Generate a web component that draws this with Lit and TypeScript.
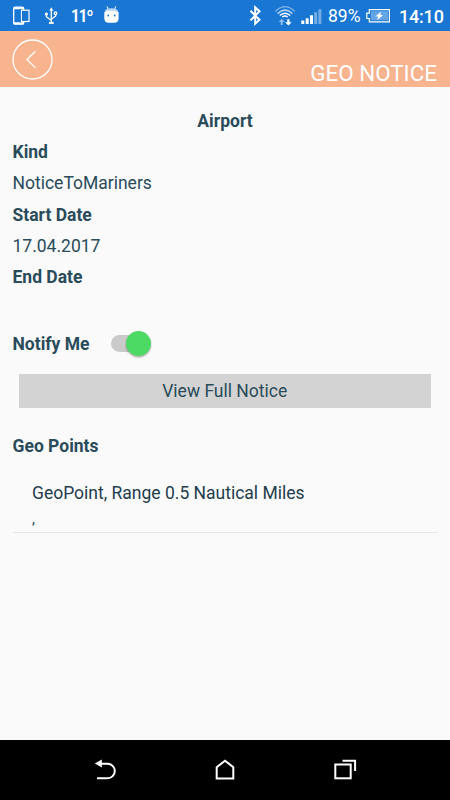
import { LitElement, html, css, svg } from "lit";
import { customElement, property, state } from "lit/decorators.js";

@customElement("status-bar")
class StatusBar extends LitElement {
  static styles = css`
    :host { display: flex; align-items: center; height: 31px; padding: 0 7px 0 12px; box-sizing: border-box;
      background: #1976d3; color: #fff; font-family: Roboto, sans-serif; }
    svg { display: block; flex: none; }
    .usb { margin-left: 14px; }
    .temp { font-weight: 700; font-size: 17.5px; line-height: 31px; margin-left: 13px; width: 22px; letter-spacing: -1px; padding-top: 1px;
      white-space: nowrap; transform: scaleX(.86); transform-origin: left; }
    .bot { margin-left: 10px; }
    .spacer { flex: 1; }
    .wifi { margin-left: 12px; }
    .signal { margin-left: 5px; }
    .pct { font-size: 17.5px; line-height: 31px; margin-left: 6px; width: 33px; padding-top: 2px; white-space: nowrap; }
    .battery { margin-left: 5px; }
    .clock { font-size: 18px; font-weight: 500; line-height: 31px; margin-left: 8px; width: 44px; padding-top: 2px; white-space: nowrap; letter-spacing: -0.2px; }
  `;
  render() {
    return html`
      <svg width="18" height="31" viewBox="12 0 18 31" fill="none" stroke="#fff">
        <rect x="13.7" y="7.2" width="10" height="17" rx="1.3" stroke-width="1.3" />
        <path d="M14 8.3h9.5M14 23.2h9.5" stroke-width="2" />
        <rect x="21.3" y="10.2" width="7.7" height="11.3" fill="#1976d3" stroke-width="1.2" />
        <path d="M20.2 9v13.5" stroke="#1976d3" />
      </svg>
      <svg class="usb" width="14" height="31" viewBox="44 0 14 31" fill="none" stroke="#fff" stroke-width="1.3">
        <path d="M51.3 9v14M46.4 14.5v2.2l4.9 3.7M51.3 19.2l4.4-3.2v-2" />
        <path d="M51.3 7.3l2 3.4h-4z" fill="#fff" stroke="none" />
        <circle cx="46.4" cy="14" r="1.6" fill="#fff" stroke="none" />
        <circle cx="55.5" cy="13.2" r="1.3" />
        <path d="M48.9 22.9h4.8" stroke-width="2" />
      </svg>
      <span class="temp">11º</span>
      <svg class="bot" width="18" height="31" viewBox="103 0 18 31">
        <path d="M107 6.3l1.2 3M115.8 6.3l-1.2 3" stroke="#fff" stroke-width="1" />
        <path d="M105 10.5q1.5-2.2 6.4-2.2t6.4 2.2v1.5h-12.8z" fill="#b9d6f3" />
        <path d="M104.3 12q7.1-2.400 14.3 0v6.200q0 4.600-4.500 4.600h-5.300q-4.500 0-4.500-4.600z" fill="#fff" />
        <circle cx="108.2" cy="15.5" r=".9" fill="#1976d3" /><circle cx="114.7" cy="15.5" r=".9" fill="#1976d3" />
      </svg>
      <span class="spacer"></span>
      <svg width="14" height="31" viewBox="248 0 14 31" fill="none" stroke="#fff" stroke-width="2">
        <path d="M250.500 10.800l9 9-4.300 4V7.400l4.300 4-9 9" />
      </svg>
      <svg class="wifi" width="22" height="31" viewBox="274 0 22 31" fill="none" stroke="#fff" stroke-width="1.5">
        <path d="M275.2 11.500q9.800-9.500 19.600 0" opacity=".4" />
        <path d="M277.6 13.700q7.400-7.200 14.800 0" opacity=".65" />
        <path d="M279.8 15.500q5.200-4.600 10.400 0M282.3 17q2.700-2 5.400 0" />
        <path d="M281.7 18.800l3 3.200h-2v3h-2v-3h-2z" fill="#8dbcf0" stroke="none" />
        <path d="M288.4 25.500l-3.300-3.300h2.200v-3h2.200v3h2.200z" fill="#fff" stroke="none" />
      </svg>
      <svg class="signal" width="21" height="31" viewBox="301 0 21 31" fill="#fff">
        <path d="M301.3 20.500h3v3.500h-3zM305.700 18.200h3v5.800h-3zM310 15.200h3v8.800h-3z" />
        <path d="M314.2 12.200h3v11.800h-3zM318.400 9.200h3v14.800h-3z" opacity=".4" />
      </svg>
      <span class="pct">89%</span>
      <svg class="battery" width="25" height="31" viewBox="366 0 25 31">
        <path d="M369.3 9.700h20.100v12.100h-20.100v-3.300h-2.500v-5.400h2.500z" fill="none" stroke="#fff" stroke-width="1.2" />
        <rect x="370.7" y="11.2" width="17.3" height="9.1" fill="#64a5e8" />
        <path d="M381.3 11.500l-6 5h3l-1.200 3.800 6-5.200h-3z" fill="#fff" />
      </svg>
      <span class="clock">14:10</span>`;
  }
}

@customElement("title-bar")
class TitleBar extends LitElement {
  @property() heading = "";
  static styles = css`
    :host { display: flex; justify-content: space-between; height: 56px; box-sizing: border-box; padding: 0 13px 0 12px;
      background: #f8b38f; color: #fff; font-family: Roboto, sans-serif; }
    button { border: 0; padding: 0; margin: 8px 0 0; width: 41px; height: 41px; background: none; }
    svg { display: block; }
    h1 { margin: 29px 0 0; font-size: 22.4px; line-height: 26px; font-weight: 400; white-space: nowrap; }
  `;
  render() {
    return html`
      <button aria-label="Back">
        <svg width="41" height="41" fill="none" stroke="#fff" stroke-width="1.3">
          <circle cx="20.5" cy="20.5" r="19.5" /><path d="M23.5 12.3l-8.5 8.3 8.5 8.3" />
        </svg>
      </button>
      <h1>${this.heading}</h1>`;
  }
}

@customElement("toggle-switch")
class ToggleSwitch extends LitElement {
  @property({ type: Boolean }) checked = false;
  static styles = css`
    :host { display: block; width: 40px; height: 26px; }
    .track { display: flex; align-items: center; width: 38px; height: 17.5px; margin-top: 4.2px; border-radius: 9px; background: #cacaca; }
    .thumb { flex: none; width: 25px; height: 25px; border-radius: 50%; background: #fff; box-shadow: 0 1.5px 2px rgba(0,0,0,.3); }
    .on { margin-left: 15px; background: #4cd964; }
  `;
  render() {
    return html`<div class="track"><div class="thumb ${this.checked ? "on" : ""}"></div></div>`;
  }
}

@customElement("nav-bar")
class NavBar extends LitElement {
  static styles = css`
    :host { display: flex; justify-content: center; align-items: center; gap: 95px; height: 60px; background: #000; }
    svg { display: block; overflow: visible; }
  `;
  render() {
    const icons = [
      svg`<path d="M4.5 5.700h9a6.400 6.400 0 0 1 0 14.600h-10.500" /><path d="M.8 5.500l7-4v8z" fill="#fff" stroke="none" />`,
      svg`<path d="M3.700 20.500V9.200l8.300-6.500 8.300 6.500v11.300z" />`,
      svg`<rect x="3.300" y="6.500" width="15.400" height="13.800" /><path d="M10.500 2.700h12.600v10.400" />`,
    ];
    return icons.map((i) => html`<svg width="24" height="24" fill="none" stroke="#fff" stroke-width="2">${i}</svg>`);
  }
}

@customElement("app-root")
class AppRoot extends LitElement {
  @state() private notify = true;
  private fields = [
    { label: "Kind", value: "NoticeToMariners" },
    { label: "Start Date", value: "17.04.2017" },
    { label: "End Date", value: "" },
  ];
  static styles = css`
    :host { display: flex; flex-direction: column; width: 450px; height: 800px; background: #fafafa; color: #294b5a;
      font-family: Roboto, sans-serif; font-size: 17.5px; overflow: hidden; }
    main { flex: 1; padding: 19px 12.5px 0; }
    h2, .label { margin: 0; font-size: 17.5px; font-weight: 700; line-height: 31.2px; }
    h2 { text-align: center; }
    .value { line-height: 31.2px; height: 31.2px; }
    .notify { display: flex; align-items: center; height: 30px; margin-top: 4.2px; gap: 22px; }
    .notify .label { padding-top: 2px; }
    .full { display: block; width: 412.5px; height: 34px; margin: 15.3px 0 0 6px; padding: 0; border: 0; background: #d3d3d3;
      color: inherit; font: inherit; line-height: 35px; }
    .points { margin-top: 23.5px; }
    .point { margin-top: 17.1px; padding: 0 19.5px; height: 52.5px; border-bottom: 1px solid #e6e6e6; }
    .name { line-height: 26px; color: #1f3d4d; }
    .detail { font-size: 15px; line-height: 26px; }
  `;
  render() {
    return html`
      <status-bar></status-bar>
      <title-bar heading="GEO NOTICE"></title-bar>
      <main>
        <h2>Airport</h2>
        ${this.fields.map((f) => html`<div class="label">${f.label}</div><div class="value">${f.value}</div>`)}
        <div class="notify"><span class="label">Notify Me</span><toggle-switch ?checked=${this.notify}
          @click=${() => (this.notify = !this.notify)}></toggle-switch></div>
        <button class="full">View Full Notice</button>
        <div class="label points">Geo Points</div>
        <div class="point">
          <div class="name">GeoPoint, Range 0.5 Nautical Miles</div>
          <div class="detail">,</div>
        </div>
      </main>
      <nav-bar></nav-bar>`;
  }
}
